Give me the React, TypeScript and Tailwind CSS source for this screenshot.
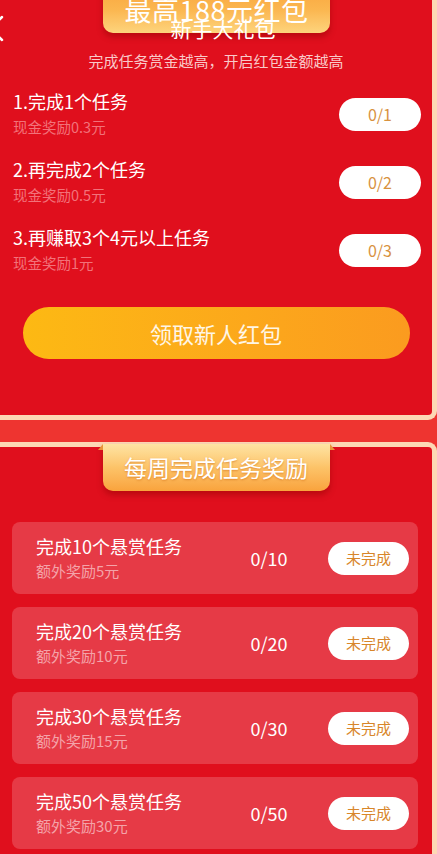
import React from "react";

const tasks = [
  { t: "1.完成1个任务", s: "现金奖励0.3元", p: "0/1" },
  { t: "2.再完成2个任务", s: "现金奖励0.5元", p: "0/2" },
  { t: "3.再赚取3个4元以上任务", s: "现金奖励1元", p: "0/3" },
];

const weekly = [
  { t: "完成10个悬赏任务", s: "额外奖励5元", p: "0/10" },
  { t: "完成20个悬赏任务", s: "额外奖励10元", p: "0/20" },
  { t: "完成30个悬赏任务", s: "额外奖励15元", p: "0/30" },
  { t: "完成50个悬赏任务", s: "额外奖励30元", p: "0/50" },
];

export default function App() {
  return (
    <div className="relative w-[437px] h-[854px] overflow-hidden bg-[#ee3430] font-['Noto_Sans_CJK_SC','Noto_Sans',sans-serif] text-white">
      {/* Card 1 */}
      <section className="relative h-[420px] bg-[#e00f1d] border-[5px] border-t-0 border-l-0 border-[#fdd8b5] rounded-br-[9px]">
        {/* top banner */}
        <div className="absolute left-[103px] top-[-14px] w-[227px] h-[47px] rounded-b-[10px] bg-gradient-to-b from-[#f9a53c] via-[#fbb64f] to-[#fdd47c] shadow-[0_4px_6px_rgba(140,0,0,0.45)] flex items-center justify-center">
          <span className="text-[27px] leading-none tracking-[0.5px] text-white">最高188元红包</span>
        </div>
        {/* header title overlapping */}
        <div className="absolute left-0 right-0 top-[15px] flex justify-center pl-[14px]">
          <span className="text-[21px] leading-[26px] text-white">新手大礼包</span>
        </div>
        {/* back chevron */}
        <svg className="absolute left-[-12px] top-[14px]" width="16" height="28" viewBox="0 0 16 28" fill="none">
          <polyline points="14,3 2,14.5 14,26" stroke="white" strokeWidth="2.5" strokeLinecap="round" strokeLinejoin="round" />
        </svg>

        <div className="pt-[50px]">
          <p className="text-center text-[15px] leading-[22px] text-[#f9c9c9]">完成任务赏金越高，开启红包金额越高</p>
          <div className="mt-[8px] flex flex-col">
            {tasks.map((x) => (
              <div key={x.t} className="h-[68px] flex items-center justify-between pl-[13px] pr-[11px]">
                <div className="flex flex-col">
                  <span className="text-[18px] leading-[26px] text-white">{x.t}</span>
                  <span className="text-[14.5px] leading-[26px] text-[#f2727a]">{x.s}</span>
                </div>
                <div className="w-[82px] h-[33px] rounded-full bg-white flex items-center justify-center text-[16px] text-[#d8923f]">
                  {x.p}
                </div>
              </div>
            ))}
          </div>
          <button className="mt-[23px] mx-auto flex w-[387px] h-[52px] items-center justify-center rounded-full bg-gradient-to-r from-[#fdb913] to-[#fb9b1f] text-[22px] text-[#fff6e6]">
            领取新人红包
          </button>
        </div>
      </section>

      {/* Card 2 */}
      <section className="relative mt-[22px] h-[500px] bg-[#e00f1d] border-[5px] border-b-0 border-l-0 border-[#fdd8b5] rounded-tr-[9px]">
        <div className="relative mx-auto -mt-[3px] w-[227px] h-[47px] rounded-b-[10px] bg-gradient-to-b from-[#fee4a3] via-[#fcc368] to-[#f9a33c] shadow-[0_4px_6px_rgba(140,0,0,0.45)] flex items-center justify-center">
          <span className="text-[23px] leading-none text-white [text-shadow:0_1px_2px_rgba(200,90,0,0.5)]">每周完成任务奖励</span>
          <div className="absolute left-[-5px] top-0 w-0 h-0 border-t-[6px] border-t-transparent border-r-[5px] border-r-[#e9953a]" />
          <div className="absolute right-[-5px] top-0 w-0 h-0 border-t-[6px] border-t-transparent border-l-[5px] border-l-[#e9953a]" />
        </div>
        <div className="mt-[31px] ml-[12px] w-[406px] flex flex-col gap-[13px]">
          {weekly.map((x) => (
            <div key={x.t} className="h-[72px] rounded-[8px] bg-[#e63a46] flex items-center pl-[24px] pr-[9px]">
              <div className="flex-1 flex flex-col">
                <span className="text-[18px] leading-[26px] text-white">{x.t}</span>
                <span className="text-[15px] leading-[24px] text-[#f4a3a9]">{x.s}</span>
              </div>
              <div className="w-[70px] mr-[24px] text-center text-[18px] text-white">{x.p}</div>
              <div className="w-[81px] h-[33px] rounded-full bg-white flex items-center justify-center text-[15px] text-[#d8862a]">
                未完成
              </div>
            </div>
          ))}
        </div>
      </section>
    </div>
  );
}
